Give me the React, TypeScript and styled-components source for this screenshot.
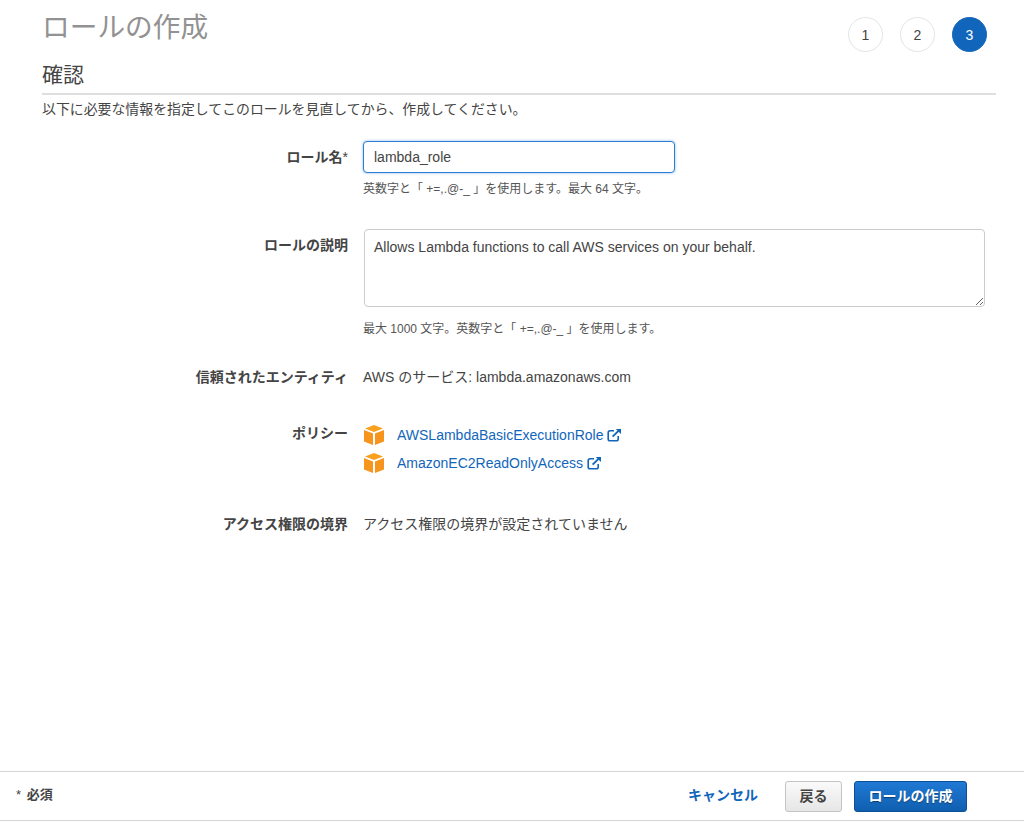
import React from "react";
import styled, { createGlobalStyle } from "styled-components";

const Global = createGlobalStyle`
  html, body { margin: 0; padding: 0; background: #fff; }
  body { font-family: "Liberation Sans", "Noto Sans CJK JP", sans-serif; color: #444; }
  * { box-sizing: border-box; }
`;
const Page = styled.div`
  height: 831px; display: flex; flex-direction: column; overflow: hidden;
`;
const Main = styled.main`
  flex: 1; padding: 0 28px 0 42px; min-height: 0;
`;
const Header = styled.header`
  display: flex; justify-content: space-between; height: 61px;
`;
const Title = styled.h1`
  margin: 9px 0 0; font-size: 27.7px; line-height: 38px; font-weight: 400; color: #929292;
`;
const Steps = styled.ol`
  list-style: none; margin: 17px 9px 0 0; padding: 0; display: flex; gap: 17px;
`;
const Step = styled.li<{ $active?: boolean }>`
  width: 35px; height: 35px; border-radius: 50%;
  display: flex; align-items: center; justify-content: center;
  font-size: 14px;
  border: 1px solid ${p => (p.$active ? "#1166bb" : "#e4e4e4")};
  background: ${p => (p.$active ? "#1166bb" : "#fff")};
  color: ${p => (p.$active ? "#fff" : "#444")};
`;
const Section = styled.h2`
  margin: 0; height: 34px; padding-top: 0; font-size: 21px; line-height: 28px; font-weight: 400; color: #444;
  border-bottom: 2px solid #dedede;
`;
const Intro = styled.p`
  margin: 4px 0 0; font-size: 13.9px; line-height: 20px; color: #444;
`;
const Form = styled.div`
  margin-top: 22px; display: flex; flex-direction: column;
`;
const Row = styled.div<{ $h: number }>`
  display: grid; grid-template-columns: 306px 1fr; column-gap: 15px; height: ${p => p.$h}px;
`;
const Label = styled.label<{ $top?: number }>`
  text-align: right; font-size: 14px; line-height: 20px; font-weight: 700; color: #444;
  padding-top: ${p => p.$top ?? 0}px;
`;
const Star = styled.span`
  font-weight: 400;
`;
const Field = styled.div`
  display: flex; flex-direction: column; min-width: 0;
`;
const TextInput = styled.input`
  width: 312px; height: 32px; padding: 0 10px; font: inherit; font-size: 14px; color: #444;
  border: 1px solid #2b7cd3; border-radius: 4px; outline: none; background: #fff;
  box-shadow: 0 0 3px rgba(43, 124, 211, 0.55);
`;
const TextArea = styled.textarea`
  display: block; width: 621px; height: 78px; margin-left: 1px; padding: 8px 9px; font: inherit; font-size: 14px;
  line-height: 18px; color: #444; border: 1px solid #ccc; border-radius: 4px; outline: none; resize: both;
`;
const Help = styled.div<{ $top: number }>`
  margin-top: ${p => p.$top}px; font-size: 12px; line-height: 16px; color: #555;
`;
const Value = styled.div<{ $top?: number }>`
  font-size: 14px; line-height: 20px; color: #444; padding-top: ${p => p.$top ?? 0}px;
`;
const PolicyList = styled.ul`
  list-style: none; margin: 2px 0 0; padding: 0; display: flex; flex-direction: column; gap: 4px;
`;
const Policy = styled.li`
  display: flex; align-items: center; height: 24px;
`;
const Cube = styled.svg`
  width: 22px; height: 22px; margin-right: 12px; flex: none;
`;
const PolicyLink = styled.a`
  font-size: 14px; color: #1166bb; text-decoration: none; display: inline-flex; align-items: center; gap: 4px;
`;
const Footer = styled.footer`
  height: 50px; margin-bottom: 10px; border-top: 1px solid #d5d5d5; border-bottom: 1px solid #d5d5d5;
  display: flex; align-items: center; padding: 0 57px 0 16px;
`;
const Required = styled.div`
  font-size: 13px; font-weight: 700; color: #444; margin-right: auto; padding-bottom: 6px;
`;
const RequiredStar = styled.span`
  font-weight: 400; margin-right: 2px;
`;
const Cancel = styled.a`
  font-size: 14px; font-weight: 700; color: #1166bb; margin-right: 27px; text-decoration: none; padding-bottom: 4px;
`;
const BackButton = styled.button`
  width: 57px; height: 31px; font: inherit; font-size: 14px; font-weight: 700; color: #444;
  border: 1px solid #c4c4c4; border-radius: 3px; background: linear-gradient(#fafafa, #e6e6e6);
  margin-right: 12px; padding: 0 0 3px;
`;
const PrimaryButton = styled.button`
  width: 113px; height: 31px; font: inherit; font-size: 14px; font-weight: 700; color: #fff;
  border: 1px solid #0b4f94; border-radius: 3px; background: linear-gradient(#2079d4, #0f5fb0);
  text-shadow: 0 1px 1px rgba(0, 0, 0, 0.4); padding: 0 0 3px;
`;

const CubeIcon = () => (
  <Cube viewBox="0 0 22 22" aria-hidden="true">
    <path d="M11 1 L20 4.6 L11 8 L2 4.6 Z" fill="#f9a11f" />
    <path d="M1 6 L10 9.6 V21 L1 17.4 Z" fill="#f7941d" />
    <path d="M21 6 L12 9.6 V21 L21 17.4 Z" fill="#f7941d" />
  </Cube>
);
const ExternalIcon = () => (
  <svg width="15" height="14" viewBox="0 0 15 14" fill="none" stroke="#1166bb" strokeWidth="1.6" aria-hidden="true">
    <path d="M7 2.8 H3 a1.8 1.8 0 0 0 -1.8 1.8 V11 a1.8 1.8 0 0 0 1.8 1.8 H9.4 a1.8 1.8 0 0 0 1.8 -1.8 V8" />
    <path d="M5.6 8.6 L13 1.4" strokeWidth="1.9" />
    <path d="M8.8 1 H14 V6 Z" fill="#1166bb" stroke="none" />
  </svg>
);

export default function App() {
  return (
    <Page>
      <Global />
      <Main>
        <Header>
          <Title>ロールの作成</Title>
          <Steps>
            <Step>1</Step>
            <Step>2</Step>
            <Step $active>3</Step>
          </Steps>
        </Header>
        <Section>確認</Section>
        <Intro>以下に必要な情報を指定してこのロールを見直してから、作成してください。</Intro>
        <Form>
          <Row $h={88}>
            <Label $top={6}>ロール名<Star>*</Star></Label>
            <Field>
              <TextInput defaultValue="lambda_role" />
              <Help $top={8}>英数字と「 +=,.@-_ 」を使用します。最大 64 文字。</Help>
            </Field>
          </Row>
          <Row $h={138}>
            <Label $top={6}>ロールの説明</Label>
            <Field>
              <TextArea defaultValue="Allows Lambda functions to call AWS services on your behalf." />
              <Help $top={14}>最大 1000 文字。英数字と「 +=,.@-_ 」を使用します。</Help>
            </Field>
          </Row>
          <Row $h={54}>
            <Label>信頼されたエンティティ</Label>
            <Value>AWS のサービス: lambda.amazonaws.com</Value>
          </Row>
          <Row $h={91}>
            <Label $top={2}>ポリシー</Label>
            <PolicyList>
              <Policy>
                <CubeIcon />
                <PolicyLink>AWSLambdaBasicExecutionRole <ExternalIcon /></PolicyLink>
              </Policy>
              <Policy>
                <CubeIcon />
                <PolicyLink>AmazonEC2ReadOnlyAccess <ExternalIcon /></PolicyLink>
              </Policy>
            </PolicyList>
          </Row>
          <Row $h={30}>
            <Label $top={2}>アクセス権限の境界</Label>
            <Value $top={2}>アクセス権限の境界が設定されていません</Value>
          </Row>
        </Form>
      </Main>
      <Footer>
        <Required><RequiredStar>*</RequiredStar> 必須</Required>
        <Cancel>キャンセル</Cancel>
        <BackButton>戻る</BackButton>
        <PrimaryButton>ロールの作成</PrimaryButton>
      </Footer>
    </Page>
  );
}
